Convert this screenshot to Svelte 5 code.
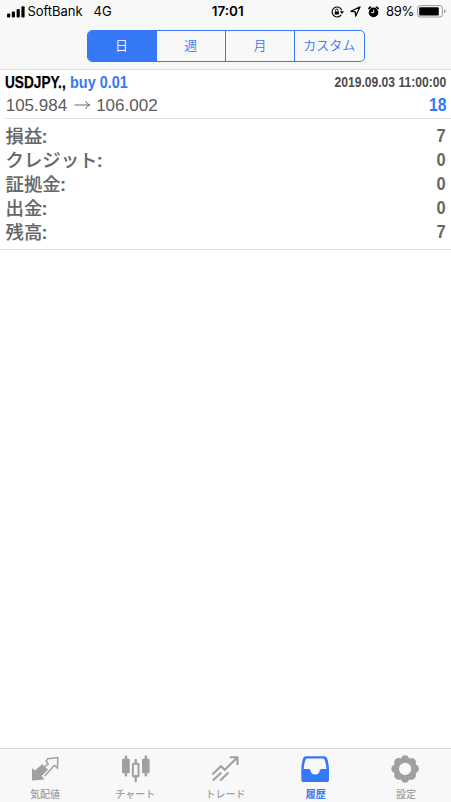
<script>
  const periods = ['日', '週', '月', 'カスタム'];
  const summary = [
    ['損益', '7'],
    ['クレジット', '0'],
    ['証拠金', '0'],
    ['出金', '0'],
    ['残高', '7']
  ];
  const tabs = [
    { id: 'quotes', label: '気配値' },
    { id: 'chart', label: 'チャート' },
    { id: 'trade', label: 'トレード' },
    { id: 'history', label: '履歴' },
    { id: 'settings', label: '設定' }
  ];
  let period = $state(0);
  let active = $state('history');
</script>

<div class="screen">
  <header>
    <div class="status">
      <div class="left">
        <svg class="signal" width="18" height="12" viewBox="0 0 18 12">
          <rect x="0" y="7.5" width="3.2" height="4" rx="1" />
          <rect x="4.8" y="5.5" width="3.2" height="6" rx="1" />
          <rect x="9.6" y="3" width="3.2" height="8.5" rx="1" />
          <rect x="14.4" y="0.2" width="3.2" height="11.3" rx="1" />
        </svg>
        <span class="carrier">SoftBank</span>
        <span class="net">4G</span>
      </div>
      <span class="time">17:01</span>
      <div class="right">
        <svg class="lock" width="13" height="12" viewBox="0 0 13 12">
          <path d="M10.8 4.2A5 5 0 1 0 10.2 8.9" fill="none" stroke="#000" stroke-width="1.1" />
          <path d="M8.8 5.2h4.2l-2 2.8z" />
          <rect x="3.7" y="5.4" width="4.2" height="3.2" rx=".4" />
          <path d="M4.6 5.6V4.2a1.2 1.2 0 0 1 2.4 0v1.4" fill="none" stroke="#000" stroke-width=".9" />
        </svg>
        <svg class="loc" width="11" height="11" viewBox="0 0 11 11">
          <path d="M10 .9L.9 5.3l4.5.5.2 4.4z" fill="none" stroke="#000" stroke-width="1.2" stroke-linejoin="round" />
        </svg>
        <svg class="alarm" width="11" height="12" viewBox="0 0 11 12">
          <circle cx="5.5" cy="6.4" r="4.8" />
          <path d="M.9 2.4L2.5 1.1M10.1 2.4L8.5 1.1" stroke="#000" stroke-width="1.7" stroke-linecap="round" />
          <path d="M5.7 3.7v2.9H3.2" fill="none" stroke="#f8f8f8" stroke-width="1" />
        </svg>
        <span class="pct">89%</span>
        <svg class="battery" width="29" height="13" viewBox="0 0 29 13">
          <rect x=".6" y=".6" width="24.8" height="11.4" rx="2.6" fill="none" stroke="#999" />
          <rect x="2.2" y="2.2" width="19.6" height="8.2" rx="1" />
          <path d="M27 4.3q1.6.5 1.6 2t-1.6 2z" fill="#999" />
        </svg>
      </div>
    </div>
    <div class="segments">
      {#each periods as label, i}
        <button class:on={period === i} onclick={() => (period = i)}>{label}</button>
      {/each}
    </div>
  </header>

  <main>
    <section class="deal">
      <div class="line first">
        <span class="name"><span class="symbol">USDJPY.,</span><span class="side">buy 0.01</span></span>
        <span class="date">2019.09.03 11:00:00</span>
      </div>
      <div class="line second">
        <span class="prices">
          <span>105.984</span>
          <svg width="17" height="10" viewBox="0 0 17 10">
            <path d="M.5 5h15M11.6 1.2Q12.8 4 15.8 5Q12.8 6 11.6 8.8" fill="none" stroke="#666" stroke-width="1" />
          </svg>
          <span>106.002</span>
        </span>
        <span class="num blue">18</span>
      </div>
    </section>
    <section class="summary">
      {#each summary as [label, value]}
        <div class="row"><span class="label">{label}<b>:</b></span><span class="num">{value}</span></div>
      {/each}
    </section>
  </main>

  <nav>
    {#each tabs as tab}
      <button class="tab" class:active={active === tab.id} onclick={() => (active = tab.id)}>
        <svg width="30" height="30" viewBox="0 0 30 30" fill="currentColor">
          {#if tab.id === 'quotes'}
            <path d="M2 26.5L2 14.2L5.2 16.6L12.2 9.9L18 15.8L11.6 22L14.6 25.4z" />
            <path d="M14.8 12.4L18.2 10L16 7.2L17.8 4.8L27.8 3.5L27.4 14.2L24.3 11.3L14.6 22.2" fill="none" stroke="currentColor" stroke-width="1.5" />
          {:else if tab.id === 'chart'}
            <rect x="2" y="4.7" width="7.8" height="14.6" rx="1.2" />
            <rect x="4.7" y="1.5" width="2.5" height="21" rx="1" />
            <rect x="22" y="4.7" width="7.6" height="14.6" rx="1.2" />
            <rect x="24.6" y="1.5" width="2.5" height="21" rx="1" />
            <rect x="12.9" y="9.8" width="5.6" height="12.4" rx=".5" fill="none" stroke="currentColor" stroke-width="2" />
            <path d="M15.7 6v3.5M15.7 22v5.3" stroke="currentColor" stroke-width="2.3" stroke-linecap="round" />
          {:else if tab.id === 'trade'}
            <path d="M2.3 20.5L10.9 12.3L14.7 15.8L27 3.8M19.8 3.2H27.5V11M2.8 26.5L11.3 18.5M10.2 26.5L18.5 18.4" fill="none" stroke="currentColor" stroke-width="2.1" />
          {:else if tab.id === 'history'}
            <path fill-rule="evenodd" d="M5.8 2.2H24.2Q26.3 2.2 27 4.1Q29 10 29 16V25.4Q29 28 26.4 28H3.9Q1.3 28 1.3 25.4V16Q1.3 10 3.2 4.1Q3.8 2.2 5.8 2.2ZM7.2 4.6Q6 4.6 5.6 5.7Q3.8 10.2 3.7 15H9Q10.4 15 10.5 16.5Q11 20.6 15.1 20.6T19.7 16.5Q19.8 15 21.3 15H26.5Q26.3 10.2 24.6 5.7Q24.2 4.6 23 4.6Z" />
          {:else}
            <path fill-rule="evenodd" d="M12.2 2.3Q15.1.2 18 2.3L19.2 4.4L21.5 3.9Q25.4 4.2 26.2 8L25.7 10.3L27.8 11.8Q30.2 14.8 27.8 17.8L25.8 19.3L26.1 21.7Q25.2 25.3 21.6 26L19.2 25.6L17.8 27.7Q15 29.6 12.3 27.7L10.9 25.6L8.5 26Q4.7 25.2 4.2 21.6L4.5 19.2L2.4 17.7Q.1 14.8 2.4 11.9L4.5 10.5L4.1 8Q4.9 4.2 8.7 3.8L11 4.4ZM15.1 8.8A6.1 6.1 0 1 0 15.1 21A6.1 6.1 0 1 0 15.1 8.8Z" />
          {/if}
        </svg>
        <span>{tab.label}</span>
      </button>
    {/each}
  </nav>
</div>

<style>
  :global(body) { margin: 0; background: #fff; }
  .screen {
    width: 451px; height: 802px; display: flex; flex-direction: column; overflow: hidden;
    background: #fff; font-family: "Liberation Sans", "Noto Sans CJK JP", sans-serif;
  }
  button { appearance: none; border: 0; margin: 0; padding: 0; background: none; font: inherit; color: inherit; }
  header { height: 69px; flex: none; background: #f8f8f8; border-bottom: 1px solid #dedede; }
  .status {
    height: 23px; box-sizing: border-box; padding: 0 5px 0 6.5px; display: grid;
    grid-template-columns: 1fr auto 1fr; align-items: center; color: #000;
    font-family: Inter, "Liberation Sans", sans-serif; font-size: 13px; line-height: 23px;
  }
  .left, .right { display: flex; align-items: center; }
  .right { justify-content: flex-end; }
  .carrier { margin-left: 3px; letter-spacing: -.05px; }
  .net { margin-left: 11px; }
  .time { font-weight: 600; font-size: 13.5px; padding-left: 3px; }
  .loc { margin-left: 6px; }
  .alarm { margin-left: 7px; }
  .pct { margin: 0 3px 0 7.5px; letter-spacing: -.3px; }
  .segments {
    width: 278px; height: 32px; box-sizing: border-box; margin: 7px auto 0; display: flex;
    border: 1px solid #3579f6; border-radius: 5px; overflow: hidden;
  }
  .segments button {
    flex: 1; border-left: 1px solid #3579f6; color: #3579f6; font-size: 13px; line-height: 28px; padding-bottom: 2px;
    font-family: "Noto Sans CJK JP", sans-serif; font-weight: 350;
  }
  .segments button:first-child { border-left: 0; }
  .segments .on { background: #3579f6; color: #fff; }

  main { flex: 1; }
  .deal { height: 48px; margin-left: 5px; border-bottom: 1px solid #e2e2e2; }
  .line { display: flex; justify-content: space-between; padding-right: 5px; }
  .first { height: 25px; line-height: 25px; }
  .second { height: 23px; line-height: 21px; color: #5c5c5c; }
  .name, .date { font-weight: 700; white-space: nowrap; }
  .name { display: flex; font-size: 17.3px; line-height: 24px; color: #000; }
  .symbol { width: 65px; transform: scaleX(.79); transform-origin: left; -webkit-text-stroke: .25px; }
  .side { color: #3579f6; transform: scaleX(.835); transform-origin: left; }
  .date { font-size: 14px; color: #4c4c4c; transform: scaleX(.865); transform-origin: right; }
  .prices { display: flex; align-items: center; height: 21px; font-size: 17px; gap: 6px; padding-left: .7px; }
  .prices svg { position: relative; top: -1px; left: 1px; }
  .num { font-weight: 700; font-size: 17.5px; transform: scaleX(.94); transform-origin: right; }
  .blue { color: #3579f6; line-height: 21px; transform: scaleX(.9); }
  .summary { height: 130px; border-bottom: 1px solid #e2e2e2; color: #666; }
  .row { height: 24px; display: flex; justify-content: space-between; padding: 0 5px 0 5.5px; line-height: 25px; }
  .row:first-child { padding-top: 5px; }
  .label { font-family: "Noto Sans CJK JP", sans-serif; font-weight: 500; font-size: 18.4px; line-height: 23px; -webkit-text-stroke: .1px; }
  .label b { font-family: "Liberation Sans", sans-serif; font-weight: 700; margin-left: -.7px; font-size: 18px; }

  nav { height: 53px; flex: none; display: flex; background: #f8f8f8; border-top: 1px solid #dadada; color: #a0a0a0; }
  .tab { flex: 1; display: flex; flex-direction: column; align-items: center; padding: 5px 0 0 0; }
  .tab svg { margin-left: -1px; }
  .tab span { font-family: "Noto Sans CJK JP", sans-serif; font-size: 10px; line-height: 14px; margin-top: 3px; font-weight: 500; }
  .active { color: #3579f6; }
  .tab.active span { font-weight: 700; }
</style>
